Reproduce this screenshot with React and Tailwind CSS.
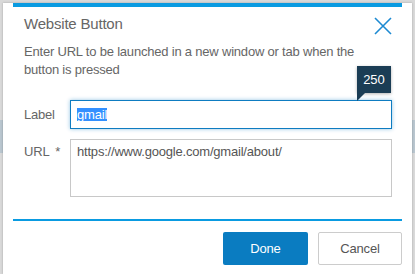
export default function App() {
  return (
    <div
      className="relative h-[274px] w-[415px] overflow-hidden bg-[#d9d9d9] px-[3px] pt-[3px]"
      style={{ fontFamily: '"Liberation Sans", Arial, sans-serif' }}
    >
      {/* page content peeking out behind the dialog */}
      <div className="absolute left-0 right-0 top-[120px] h-[33px] bg-[#b9c6cf]" />

      <div className="relative h-[271px] bg-white shadow-[0_0_2px_rgba(0,0,0,0.25)]">
        <div className="mx-[10px] h-[4px] bg-[#0a9be1]" />

        <div className="flex items-start justify-between pl-[21px] pr-[20px] pt-[7px]">
          <h2 className="text-[15px] leading-[20px] tracking-[-0.2px] text-[#666]">Website Button</h2>
          <button className="mt-[3px] text-[#1d8ad2]" aria-label="Close">
            <svg width="18" height="18" viewBox="0 0 18 18" fill="none">
              <path d="M1 1L17 17M17 1L1 17" stroke="currentColor" strokeWidth="1.6" />
            </svg>
          </button>
        </div>

        <p className="mt-[8px] pl-[21px] pr-[20px] text-[13px] leading-[18px] tracking-[-0.2px] text-[#666]">
          Enter URL to be launched in a new window or tab when the button is pressed
        </p>

        <div className="mt-[21px] flex items-center pl-[21px] pr-[20px]">
          <label className="w-[46px] text-[13px] leading-[18px] tracking-[-0.2px] text-[#666]">Label</label>
          <div className="relative flex-1">
            <div className="flex h-[29px] items-center border border-[#0e7cc1] px-[6px] shadow-[0_0_4px_rgba(14,124,193,0.45)]">
              <span className="bg-[#3390ff] text-[13px] leading-[13px] tracking-[-0.2px] text-white">gmail</span>
            </div>
            <div className="absolute bottom-[36px] right-[1px] flex h-[27px] w-[34px] items-center justify-center bg-[#1b3d55] text-[13px] text-white shadow-[0_1px_3px_rgba(0,0,0,0.3)]">
              250
              <svg className="absolute left-0 top-full" width="8" height="8" viewBox="0 0 8 8">
                <path d="M0 0H8L0 8Z" fill="#1b3d55" />
              </svg>
            </div>
          </div>
        </div>

        <div className="mt-[10px] flex items-start pl-[21px] pr-[20px]">
          <label className="w-[46px] pt-[4px] text-[13px] leading-[18px] tracking-[-0.2px] text-[#666]">
            URL <span className="ml-[3px]">*</span>
          </label>
          <div className="h-[58px] flex-1 border border-[#c8c8c8] px-[6px] pt-[3px] text-[13px] leading-[18px] tracking-[-0.2px] text-[#555]">
            https://www.google.com/gmail/about/
          </div>
        </div>

        <div className="mx-[10px] mt-[22px] h-[2px] bg-[#0a9be1]" />

        <div className="mt-[11px] flex justify-end gap-[10px] pr-[10px]">
          <button className="h-[33px] w-[85px] rounded-[2px] bg-[#0a7cc1] text-[13px] tracking-[-0.2px] text-white">
            Done
          </button>
          <button className="h-[33px] w-[84px] rounded-[2px] border border-[#cccccc] bg-white text-[13px] tracking-[-0.2px] text-[#555]">
            Cancel
          </button>
        </div>
      </div>
    </div>
  );
}
